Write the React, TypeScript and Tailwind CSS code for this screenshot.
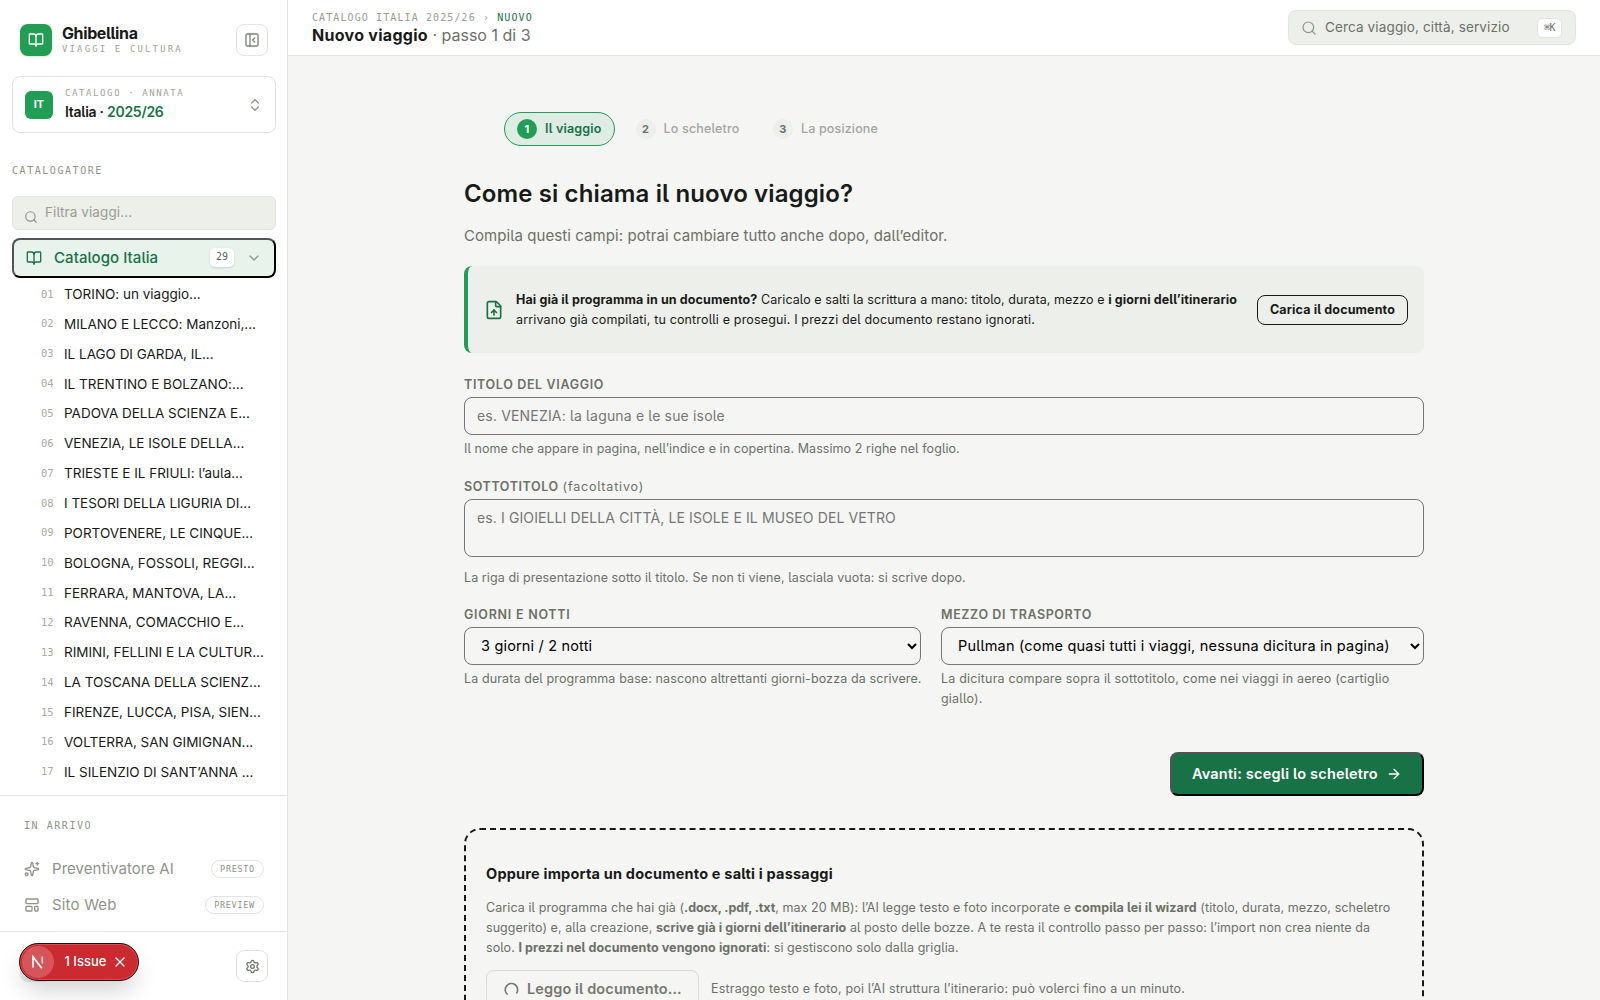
import React from 'react'
import {
  ArrowRight, BookOpen, ChevronDown, ChevronsUpDown, FileUp, LayoutTemplate,
  PanelLeftClose, Search, Settings, X,
} from 'lucide-react'

const viaggi = [
  'TORINO: un viaggio...',
  'MILANO E LECCO: Manzoni,...',
  'IL LAGO DI GARDA, IL...',
  'IL TRENTINO E BOLZANO:...',
  'PADOVA DELLA SCIENZA E...',
  'VENEZIA, LE ISOLE DELLA...',
  'TRIESTE E IL FRIULI: l’aula...',
  'I TESORI DELLA LIGURIA DI...',
  'PORTOVENERE, LE CINQUE...',
  'BOLOGNA, FOSSOLI, REGGI...',
  'FERRARA, MANTOVA, LA...',
  'RAVENNA, COMACCHIO E...',
  'RIMINI, FELLINI E LA CULTUR...',
  'LA TOSCANA DELLA SCIENZ...',
  'FIRENZE, LUCCA, PISA, SIEN...',
  'VOLTERRA, SAN GIMIGNAN...',
  'IL SILENZIO DI SANT’ANNA ...',
]

const mono = "font-['DejaVu_Sans_Mono',monospace]"

/* preventivatore icon: star, plus and a small ring */
function SparkIcon() {
  return (
    <svg width="16" height="16" viewBox="0 0 24 24" fill="none" stroke="currentColor" strokeWidth="2" strokeLinecap="round" strokeLinejoin="round">
      <path d="M11.017 2.814a1 1 0 0 1 1.966 0l1.051 5.558a2 2 0 0 0 1.594 1.594l5.558 1.051a1 1 0 0 1 0 1.966l-5.558 1.051a2 2 0 0 0-1.594 1.594l-1.051 5.558a1 1 0 0 1-1.966 0l-1.051-5.558a2 2 0 0 0-1.594-1.594l-5.558-1.051a1 1 0 0 1 0-1.966l5.558-1.051a2 2 0 0 0 1.594-1.594z" />
      <path d="M20 2v4" />
      <path d="M22 4h-4" />
      <circle cx="4" cy="20" r="2" />
    </svg>
  )
}

function Sidebar() {
  return (
    <aside className="flex h-full w-[288px] shrink-0 flex-col border-r border-[#e2e4e0] bg-white">
      <div className="flex h-[76px] shrink-0 items-start pl-5 pr-[19px] pt-6">
        <div className="flex size-8 items-center justify-center rounded-lg bg-[#219d55] text-white shadow-sm">
          <BookOpen size={16} />
        </div>
        <div className="ml-[10px] flex-1">
          <div className="mt-[-1px] text-[16px] font-bold leading-[20px] tracking-[-0.024em]">Ghibellina</div>
          <div className={`${mono} whitespace-nowrap text-[9px] leading-[12px] tracking-[0.237em] text-[#a0a397]`}>VIAGGI E CULTURA</div>
        </div>
        <button className="flex size-8 items-center justify-center rounded-lg border border-[#e2e4e0] text-[#80857a]">
          <PanelLeftClose size={16} />
        </button>
      </div>

      <div className="ml-3 mr-[11px] flex h-[57px] shrink-0 items-center rounded-lg border border-[#e2e4e0] pl-3 pr-[12px]">
        <div className="flex size-7 items-center justify-center rounded-md bg-[#219d55] pb-px text-[11px] font-bold text-white">IT</div>
        <div className="ml-3 flex-1">
          <div className={`${mono} mt-[-2px] whitespace-nowrap text-[9px] leading-[14px] tracking-[0.178em] text-[#a0a397]`}>CATALOGO · ANNATA</div>
          <div className="mt-[2px] whitespace-nowrap text-[14px] font-semibold leading-[20px] tracking-[-0.02em]">Italia · <span className="text-[#177245]">2025/26</span></div>
        </div>
        <ChevronsUpDown size={16} className="text-[#8f9488]" />
      </div>

      <div className={`${mono} ml-3 mt-[30px] shrink-0 text-[10px] leading-[16px] tracking-[0.155em] text-[#8f9488]`}>CATALOGATORE</div>

      <div className="ml-3 mr-[11px] mt-[17px] flex h-[34px] shrink-0 items-center rounded-md border border-[#e2e4e0] bg-[#edefea] pl-[11px]">
        <Search size={14} className="mt-[7px] text-[#8f9488]" />
        <span className="mb-px ml-[7px] text-[13.5px] tracking-[0.008em] text-[#9a9d92]">Filtra viaggi...</span>
      </div>

      <button className="ml-3 mr-[11px] mt-2 flex h-10 shrink-0 items-center rounded-lg border-2 border-black bg-[#e7f3eb] pl-3 pr-[12px] text-[#177245] [border-style:outset]">
        <BookOpen size={16} />
        <span className="ml-3 flex-1 pt-px text-left text-[15px] font-medium tracking-[0.004em]">Catalogo Italia</span>
        <span className={`${mono} mb-px flex h-[19px] w-6 items-center justify-center rounded-[5px] bg-white pb-[2px] text-[10px] text-[#5c6156] shadow-sm`}>29</span>
        <ChevronDown size={16} className="ml-3 text-[#8f9488]" />
      </button>

      <div className="min-h-0 flex-1 overflow-hidden pt-px">
        {viaggi.map((v, i) => (
          <div key={v} className="flex h-[29.87px] items-center pl-[41px]">
            <span className={`${mono} mt-px w-[23px] text-[10.5px] text-[#a9ab9f]`}>{String(i + 1).padStart(2, '0')}</span>
            <span className="whitespace-nowrap text-[13.5px] leading-[18px] tracking-[-0.001em]">{v}</span>
          </div>
        ))}
      </div>

      <div className="h-[136px] shrink-0 border-t border-[#e2e4e0] pl-6 pr-[23px] text-[#8f9488]">
        <div className={`${mono} mt-[22px] text-[10px] leading-[16px] tracking-[0.155em]`}>IN ARRIVO</div>
        <div className="mt-[17px] flex h-9 items-center">
          <SparkIcon />
          <span className="ml-3 flex-1 text-[15px] tracking-[0.003em]">Preventivatore AI</span>
          <span className={`${mono} flex h-[18px] w-[53px] items-center justify-center rounded-full border border-[#e2e4e0] text-[8.5px] tracking-[0.08em]`}>PRESTO</span>
        </div>
        <div className="flex h-9 items-center">
          <LayoutTemplate size={16} />
          <span className="ml-3 flex-1 text-[15px] tracking-[0.012em]">Sito Web</span>
          <span className={`${mono} flex h-[18px] w-[59px] items-center justify-center rounded-full border border-[#e2e4e0] text-[8.5px] tracking-[0.08em]`}>PREVIEW</span>
        </div>
      </div>

      <div className="relative flex h-[69px] shrink-0 items-start justify-between border-t border-[#e2e4e0] pl-5 pr-[19px] pt-[18px]">
        <div className="size-8 rounded-lg bg-[#dfede4]" />
        <button className="flex size-8 items-center justify-center rounded-lg border border-[#e2e4e0] text-[#6b7166]">
          <Settings size={15} />
        </button>
        <IssueBadge />
      </div>
    </aside>
  )
}

function IssueBadge() {
  return (
    <div className="absolute left-[19px] top-[11px] flex h-[38px] w-[120px] items-center rounded-full border border-[#1b1010] bg-[#ca2a30] pl-[2px] text-white shadow-[inset_0_0_0_1px_#e5484d,0_12px_24px_-4px_rgba(0,0,0,0.2)]">
      <div className="flex size-8 items-center justify-center rounded-full bg-[#d5555a]">
        <svg width="14" height="14" viewBox="0 0 14 14" fill="none" stroke="#fff" strokeWidth="1.7">
          <path d="M2 12.5V1.8l8.8 11.4" />
          <path d="M11.3 1.5v7.2" strokeOpacity="0.7" />
        </svg>
      </div>
      <span className="ml-[10.5px] whitespace-nowrap text-[13px] font-medium">1 Issue</span>
      <X size={16} className="ml-[6px]" strokeWidth={1.8} />
    </div>
  )
}

function Header() {
  return (
    <header className="flex h-14 shrink-0 items-start justify-between border-b border-[#e2e4e0] bg-white pl-6 pr-6">
      <div>
        <div className={`${mono} mt-[11px] whitespace-nowrap text-[10px] leading-[14px] tracking-[0.11em] text-[#9a9d92]`}>
          CATALOGO ITALIA 2025/26 <span>›</span> <span className="text-[#177245]">NUOVO</span>
        </div>
        <div className="mt-[-1px] whitespace-nowrap text-[16px] leading-[22px] text-[#6b7166]">
          <b className="tracking-[0.018em] text-[#181a17]">Nuovo viaggio</b> · passo 1 di 3
        </div>
      </div>
      <div className="mt-[10px] flex h-[35px] w-72 items-center rounded-lg border border-[#e2e4e0] bg-[#edefea] pl-[12px] pr-[13px]">
        <Search size={16} strokeWidth={1.8} className="text-[#8f9488]" />
        <span className="ml-2 flex-1 whitespace-nowrap text-[13.5px] tracking-[0.01em] text-[#6b7166]">Cerca viaggio, città, servizio</span>
        <span className={`${mono} flex h-5 w-[25px] items-center justify-center rounded-[5px] border border-[#e2e4e0] bg-white text-[10px] tracking-[-0.04em] text-[#6b7166]`}>⌘K</span>
      </div>
    </header>
  )
}

function Steps() {
  return (
    <div className="ml-10 flex gap-2 text-[12.5px]">
      <div className="flex h-[34px] items-center gap-2 rounded-full border border-[#219d55] bg-[#deece3] px-3 font-semibold tracking-[0.015em] text-[#177245]">
        <span className="flex size-5 items-center justify-center rounded-full bg-[#219d55] text-[11px] font-bold text-white">1</span>
        Il viaggio
      </div>
      <div className="flex h-[34px] items-center gap-2 px-[13px] font-medium tracking-[0.014em] text-[#a3a69c]">
        <span className="flex size-5 items-center justify-center rounded-full bg-[#edefea] text-[11px] font-bold text-[#6b7166]">2</span>
        Lo scheletro
      </div>
      <div className="flex h-[34px] items-center gap-2 px-[12.5px] font-medium tracking-[0.012em] text-[#a3a69c]">
        <span className="flex size-5 items-center justify-center rounded-full bg-[#edefea] text-[11px] font-bold text-[#6b7166]">3</span>
        La posizione
      </div>
    </div>
  )
}

const labelCls = 'block text-[12.5px] font-semibold leading-[20px] text-[#6b7166]'
const helpCls = 'text-[12.5px] leading-[20px] text-[#6b7166]'
const fieldCls = 'block w-full rounded-lg border border-[#767676] bg-transparent px-3 placeholder:text-[#757575]'

export default function App() {
  return (
    <div className="flex h-[1000px] w-[1600px] overflow-hidden bg-[#f5f5f3] font-['Inter','Liberation_Sans',sans-serif] text-[#181a17] [font-feature-settings:'cv05']">
      <Sidebar />
      <div className="flex min-w-0 flex-1 flex-col">
        <Header />
        <main className="min-h-0 flex-1 overflow-hidden pt-14">
          <div className="ml-[176px] w-[960px]">
            <Steps />
            <h1 className="mt-[30px] text-[24px] font-semibold leading-[36px] tracking-[0.005em]">Come si chiama il nuovo viaggio?</h1>
            <p className="mt-[12px] text-[15px] leading-[24px] tracking-[0.005em] text-[#6b7166]">Compila questi campi: potrai cambiare tutto anche dopo, dall’editor.</p>

            <div className="mt-[18px] flex h-[87px] items-center rounded-lg border-l-4 border-[#219d55] bg-[#edefea] pl-4 pr-4">
              <FileUp size={20} className="shrink-0 text-[#177245]" />
              <p className="ml-3 flex-1 whitespace-nowrap text-[12.5px] leading-[20px] tracking-[0.009em]">
                <b>Hai già il programma in un documento?</b> <span className="tracking-[0.006em]">Caricalo e salti la scrittura a mano: titolo, durata, mezzo e</span> <b>i giorni dell’itinerario</b>
                <br />
                <span className="tracking-[0.0125em]">arrivano già compilati, tu controlli e prosegui. I prezzi del documento restano ignorati.</span>
              </p>
              <button className="h-[30px] w-[151px] rounded-lg border border-[#181a17] pt-px text-[12.5px] font-bold tracking-[0.011em]">Carica il documento</button>
            </div>

            <label className={`${labelCls} mt-[22px] tracking-[0.052em]`}>TITOLO DEL VIAGGIO</label>
            <input className={`${fieldCls} mt-[2px] h-[38px] pb-[3px] pt-px text-[14px] tracking-[0.012em]`} placeholder="es. VENEZIA: la laguna e le sue isole" />
            <p className={`${helpCls} mt-1 tracking-[0.006em]`}>Il nome che appare in pagina, nell’indice e in copertina. Massimo 2 righe nel foglio.</p>

            <label className={`${labelCls} mt-[18px] tracking-[0.048em]`}>SOTTOTITOLO <span className="font-normal tracking-[0.067em]">(facoltativo)</span></label>
            <textarea className={`${fieldCls} mt-[2px] h-[58px] resize-none pt-[7px] text-[14px] leading-[22px] tracking-[0.008em]`} placeholder="es. I GIOIELLI DELLA CITTÀ, LE ISOLE E IL MUSEO DEL VETRO" />
            <p className={`${helpCls} mt-[11px] tracking-[0.007em]`}>La riga di presentazione sotto il titolo. Se non ti viene, lasciala vuota: si scrive dopo.</p>

            <div className="mt-[17px] flex gap-5">
              <div className="w-[457px]">
                <label className={`${labelCls} tracking-[0.06em]`}>GIORNI E NOTTI</label>
                <select className={`${fieldCls} mt-[2px] h-[38px] pb-px text-[14.5px] tracking-[0.012em] text-black`}>
                  <option>3 giorni / 2 notti</option>
                </select>
                <p className={`${helpCls} mt-1 whitespace-nowrap tracking-[0.009em]`}>La durata del programma base: nascono altrettanti giorni-bozza da scrivere.</p>
              </div>
              <div className="w-[483px]">
                <label className={`${labelCls} tracking-[0.048em]`}>MEZZO DI TRASPORTO</label>
                <select className={`${fieldCls} mt-[2px] h-[38px] pb-px text-[14.5px] tracking-[0.014em] text-black`}>
                  <option>Pullman (come quasi tutti i viaggi, nessuna dicitura in pagina)</option>
                </select>
                <p className={`${helpCls} mt-1 tracking-[0.0155em]`}>La dicitura compare sopra il sottotitolo, come nei viaggi in aereo (cartiglio<br />giallo).</p>
              </div>
            </div>

            <div className="mt-[43px] flex justify-end">
              <button className="flex h-11 w-[254px] items-center rounded-lg border-2 border-black bg-[#177245] pl-5 text-[14.5px] font-semibold tracking-[0.013em] text-white [border-style:outset]">
                Avanti: scegli lo scheletro
                <ArrowRight size={16} className="ml-2" />
              </button>
            </div>

            <section className="mt-8 h-[260px] rounded-2xl border-2 border-dashed border-[#181a17] px-5 pt-[33px]">
              <h2 className="text-[14.5px] font-bold leading-[22px] tracking-[0.014em]">Oppure importa un documento e salti i passaggi</h2>
              <p className="mt-[13px] whitespace-nowrap text-[12.5px] leading-[19.75px] tracking-[0.0065em] text-[#6b7166]">
                Carica il programma che hai già (<b className="tracking-[-0.007em]">.docx, .pdf, .txt</b>, max 20 MB): l’AI legge testo e foto incorporate e <b>compila lei il wizard</b> (titolo, durata, mezzo, scheletro<br />
                <span className="tracking-[0.005em]">suggerito) e, alla creazione, <b>scrive già i giorni dell’itinerario</b> al posto delle bozze. A te resta il controllo passo per passo: l’import non crea niente da</span><br />
                solo. <b>I prezzi nel documento vengono ignorati</b>: si gestiscono solo dalla griglia.
              </p>
              <div className="mt-[13px] flex items-center">
                <button className="flex h-[38px] w-[213px] items-center rounded-lg border border-[#dadbd8] pl-[17px] text-[14.5px] font-semibold tracking-[0.008em] text-[#74796f]">
                  <svg width="15" height="15" viewBox="0 0 15 15" fill="none" stroke="currentColor" strokeWidth="1.6">
                    <path d="M3.6 12.6A6.2 6.2 0 1 1 12.4 11.4" />
                  </svg>
                  <span className="ml-[8px]">Leggo il documento…</span>
                </button>
                <span className="ml-3 whitespace-nowrap text-[12.5px] tracking-[0.0146em] text-[#6b7166]">Estraggo testo e foto, poi l’AI struttura l’itinerario: può volerci fino a un minuto.</span>
              </div>
            </section>
          </div>
        </main>
      </div>
    </div>
  )
}
